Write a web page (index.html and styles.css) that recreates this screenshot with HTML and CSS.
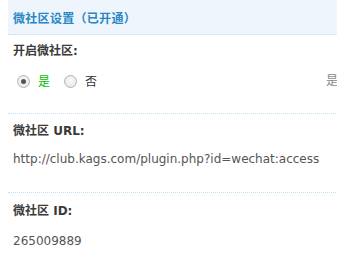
FILE: index.html
```html
<!DOCTYPE html>
<html>
<head>
<meta charset="utf-8">
<link rel="stylesheet" href="styles.css">
</head>
<body>
<div class="panel">
  <div class="hd"><h2>微社区设置（已开通）</h2></div>
  <div class="sec sec1">
    <div class="label">开启微社区:</div>
    <div class="row">
      <div class="radios">
        <span class="opt"><span class="radio on"></span><span class="yes">是</span></span>
        <span class="opt"><span class="radio"></span><span class="no">否</span></span>
      </div>
      <div class="hint">是否开启微社区</div>
    </div>
  </div>
  <div class="sec sec2">
    <div class="label">微社区 URL:</div>
    <div class="value">http://club.kags.com/plugin.php?id=wechat:access</div>
  </div>
  <div class="sec sec3">
    <div class="label">微社区 ID:</div>
    <div class="value">265009889</div>
  </div>
</div>
</body>
</html>
```
FILE: styles.css
```css
html { overflow: hidden; }
body {
  margin: 0 0 0 8px;
  font-family: "DejaVu Sans", "Noto Sans CJK SC", sans-serif;
  font-size: 12px;
  color: #444;
}
.panel { width: 600px; }
.hd {
  height: 34px;
  background: #eef5fd;
  border-bottom: 1px dotted #c4def2;
  display: flex;
  align-items: center;
  padding-left: 5px;
}
.hd h2 {
  margin: 0;
  font-size: 12px;
  font-weight: bold;
  color: #2a86c4;
  letter-spacing: 0.3px;
  font-family: "Noto Sans CJK SC", sans-serif;
}
.sec {
  padding: 7px 0 23px 5px;
  border-bottom: 1px dotted #c4def2;
}
.sec3 { border-bottom: none; padding-top: 9px; }
.sec2 { padding-top: 8px; padding-bottom: 24px; }
.label {
  line-height: 18px;
  font-weight: bold;
  color: #3a3a3a;
}
.value {
  line-height: 18px;
  margin-top: 10px;
  color: #555;
}
.sec3 .value { margin-top: 12px; }
.row {
  display: grid;
  grid-template-columns: 313px auto;
  margin-top: 12px;
  line-height: 18px;
}
.radios { display: flex; align-items: center; }
.opt { display: flex; align-items: center; margin-right: 10px; }
.radio {
  box-sizing: border-box;
  width: 13px;
  height: 13px;
  border-radius: 50%;
  border: 1px solid #b4b4b4;
  background: radial-gradient(circle at 50% 40%, #fafafa 0, #e2e2e2 100%);
  margin: 0 8px 0 4px;
  position: relative;
}
.radio.on::after {
  content: "";
  position: absolute;
  left: 3px;
  top: 3px;
  width: 5px;
  height: 5px;
  border-radius: 50%;
  background: #555;
}
.yes { color: #00c000; font-family: "Noto Sans CJK SC", sans-serif; }
.no { color: #333; font-family: "Noto Sans CJK SC", sans-serif; }
.hint { color: #888; white-space: nowrap; }
```
